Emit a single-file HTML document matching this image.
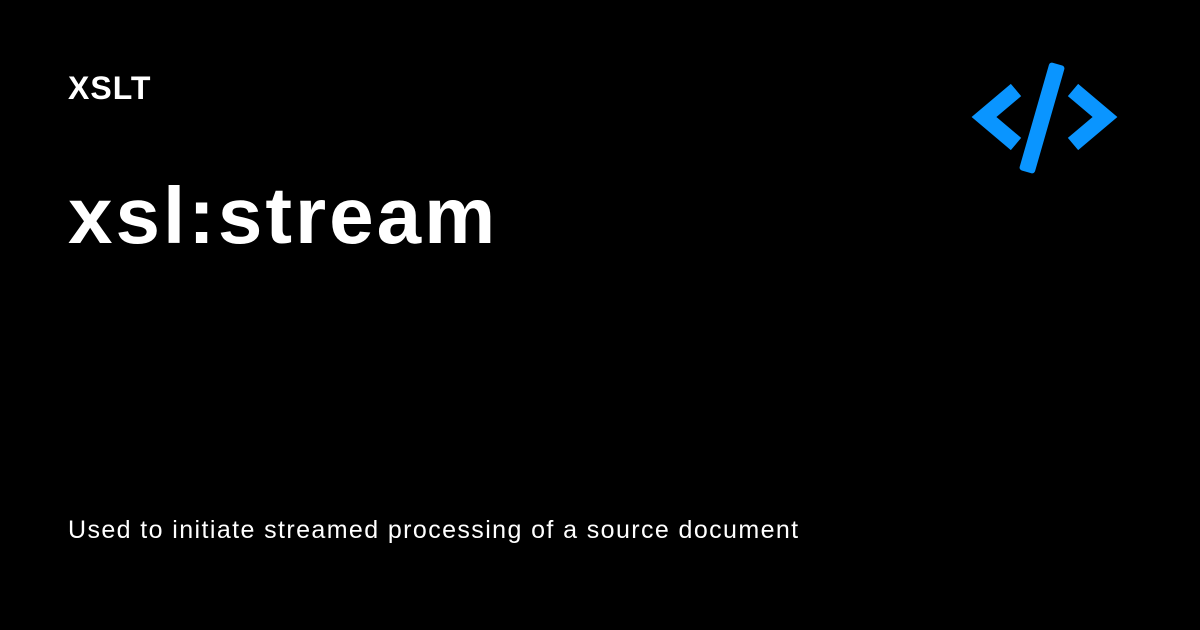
<!DOCTYPE html>
<html><head><style>
html,body{margin:0;padding:0;background:#000;width:1200px;height:630px;overflow:hidden}
body{position:relative;font-family:"Liberation Sans",sans-serif;color:#fff}
.t{position:absolute;left:68px;white-space:nowrap}
</style></head><body>
<div class="t" style="top:70px;font-size:32px;font-weight:bold;line-height:36px;letter-spacing:1px">XSLT</div>
<div class="t" style="top:170px;font-size:80px;font-weight:bold;line-height:92px;letter-spacing:3px">xsl:stream</div>
<div class="t" style="top:514px;font-size:25px;line-height:32px;letter-spacing:1.4px">Used to initiate streamed processing of a source document</div>
<svg style="position:absolute;left:0;top:0" width="1200" height="630">
<g fill="none" stroke="#0a95ff" stroke-width="16" stroke-linejoin="miter">
<polyline points="1016,90 984,117 1016,144"/>
<polyline points="1073,90 1105,117 1073,144"/>
</g>
<rect x="1034" y="62" width="16" height="112" rx="3" fill="#0a95ff" transform="rotate(16 1042 118)"/>
</svg>
</body></html>
